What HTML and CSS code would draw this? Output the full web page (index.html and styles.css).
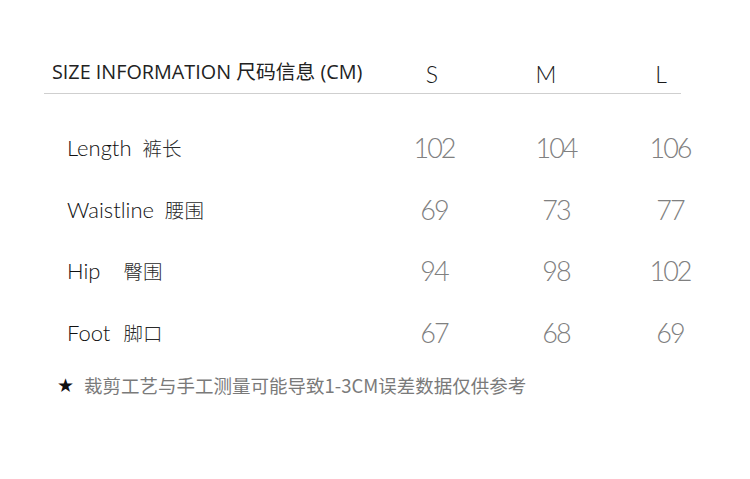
FILE: index.html
```html
<!DOCTYPE html>
<html lang="zh">
<head>
<meta charset="utf-8">
<title>Size Information</title>
<link rel="stylesheet" href="styles.css">
</head>
<body>
<div class="sheet">
  <div class="head">
    <div class="title">SIZE INFORMATION 尺码信息 (CM)</div>
    <div class="size">S</div>
    <div class="size">M</div>
    <div class="size">L</div>
  </div>
  <div class="rule"></div>
  <div class="table">
    <div class="row">
      <div class="label"><span class="en">Length</span><span class="cn cn-length">裤长</span></div>
      <div class="num">102</div><div class="num">104</div><div class="num">106</div>
    </div>
    <div class="row">
      <div class="label"><span class="en">Waistline</span><span class="cn cn-waist">腰围</span></div>
      <div class="num">69</div><div class="num">73</div><div class="num">77</div>
    </div>
    <div class="row">
      <div class="label"><span class="en">Hip</span><span class="cn cn-hip">臀围</span></div>
      <div class="num">94</div><div class="num">98</div><div class="num">102</div>
    </div>
    <div class="row">
      <div class="label"><span class="en">Foot</span><span class="cn cn-foot">脚口</span></div>
      <div class="num">67</div><div class="num">68</div><div class="num">69</div>
    </div>
  </div>
  <div class="note"><span class="star">★</span><span class="note-text">裁剪工艺与手工测量可能导致1-3CM误差数据仅供参考</span></div>
</div>
</body>
</html>
```
FILE: styles.css
```css
html, body {
  margin: 0;
  padding: 0;
  background: #ffffff;
}
.sheet {
  width: 750px;
  height: 479px;
  padding-top: 56px;
  box-sizing: border-box;
}
.head {
  display: grid;
  grid-template-columns: 323px 114px 114px 116px;
  margin-left: 52px;
  align-items: end;
  height: 30px;
}
.title {
  font-family: "Open Sans", "Noto Sans CJK SC", sans-serif;
  font-size: 19.8px;
  color: #222;
  line-height: 30px;
  letter-spacing: 0;
  white-space: nowrap;
  transform: translateY(1px);
}
.size {
  font-family: "Lato", "Noto Sans", sans-serif;
  font-weight: 300;
  font-size: 23px;
  color: #1a1a1a;
  text-align: center;
  line-height: 30px;
  transform: translateY(3px);
}
.rule {
  margin-left: 44px;
  width: 637px;
  height: 0;
  border-top: 1px solid #cfcfcf;
  margin-top: 7px;
}
.table {
  margin-top: 23px;
  margin-left: 67px;
}
.row {
  display: grid;
  grid-template-columns: 307px 122px 122px 106px;
  height: 61.5px;
  align-items: center;
}
.label {
  display: flex;
  align-items: baseline;
  white-space: nowrap;
  color: #111;
}
.en {
  font-family: "Lato", sans-serif;
  font-weight: 300;
  font-size: 22px;
}
.cn {
  font-family: "Noto Sans CJK SC", sans-serif;
  font-weight: 300;
  font-size: 19.5px;
  color: #2a2a2a;
}
.cn-length { margin-left: 11px; }
.cn-waist { margin-left: 11px; }
.cn-hip { margin-left: 23px; }
.cn-foot { margin-left: 13px; }
.num {
  font-family: "Lato", sans-serif;
  font-weight: 300;
  font-size: 27px;
  letter-spacing: -2px;
  color: #808080;
  text-align: center;
  text-indent: -2px;
}
.note {
  display: flex;
  align-items: center;
  margin-left: 57px;
  margin-top: 10px;
  height: 24px;
}
.star {
  font-family: "DejaVu Sans", sans-serif;
  font-size: 19px;
  color: #111;
  width: 27px;
}
.note-text {
  font-family: "Noto Sans CJK SC", sans-serif;
  font-size: 18.5px;
  color: #7a7a7a;
  letter-spacing: 0;
}
```
